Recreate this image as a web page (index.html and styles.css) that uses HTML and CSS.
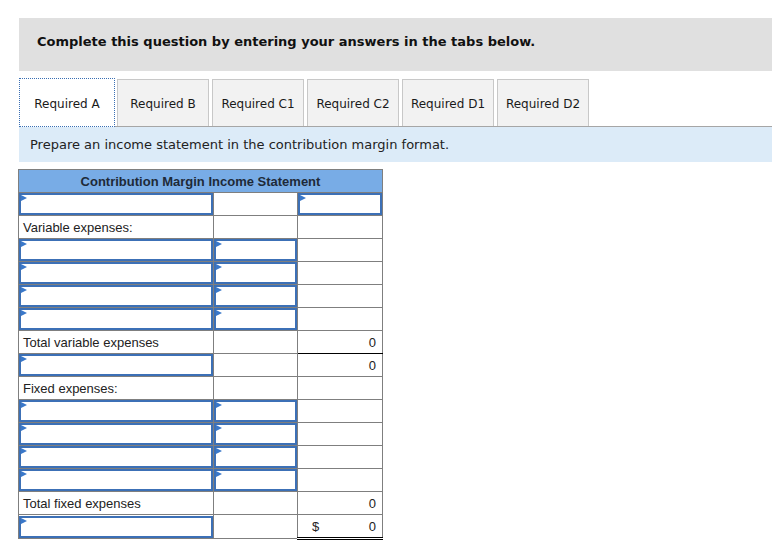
FILE: index.html
```html
<!DOCTYPE html>
<html>
<head>
<meta charset="utf-8">
<link rel="stylesheet" href="styles.css">
</head>
<body>
<div class="banner">Complete this question by entering your answers in the tabs below.</div>
<div class="tabs">
  <div class="tab active">Required A</div>
  <div class="tab">Required B</div>
  <div class="tab">Required C1</div>
  <div class="tab">Required C2</div>
  <div class="tab">Required D1</div>
  <div class="tab">Required D2</div>
</div>
<div class="instr">Prepare an income statement in the contribution margin format.</div>
<table class="cm">
  <colgroup><col class="c1"><col class="c2"><col class="c3"></colgroup>
  <tr><th colspan="3">Contribution Margin Income Statement</th></tr>
  <tr><td class="in"><div class="box"></div></td><td></td><td class="in"><div class="box"></div></td></tr>
  <tr><td class="lbl">Variable expenses:</td><td></td><td></td></tr>
  <tr><td class="in"><div class="box"></div></td><td class="in"><div class="box"></div></td><td></td></tr>
  <tr><td class="in"><div class="box"></div></td><td class="in"><div class="box"></div></td><td></td></tr>
  <tr><td class="in"><div class="box"></div></td><td class="in"><div class="box"></div></td><td></td></tr>
  <tr><td class="in"><div class="box"></div></td><td class="in"><div class="box"></div></td><td></td></tr>
  <tr><td class="lbl">Total variable expenses</td><td class="topblk"></td><td class="num botblk">0</td></tr>
  <tr><td class="in"><div class="box"></div></td><td></td><td class="num">0</td></tr>
  <tr><td class="lbl">Fixed expenses:</td><td></td><td></td></tr>
  <tr><td class="in"><div class="box"></div></td><td class="in"><div class="box"></div></td><td></td></tr>
  <tr><td class="in"><div class="box"></div></td><td class="in"><div class="box"></div></td><td></td></tr>
  <tr><td class="in"><div class="box"></div></td><td class="in"><div class="box"></div></td><td></td></tr>
  <tr><td class="in"><div class="box"></div></td><td class="in"><div class="box"></div></td><td></td></tr>
  <tr><td class="lbl">Total fixed expenses</td><td class="topblk"></td><td class="num">0</td></tr>
  <tr><td class="in"><div class="box"></div></td><td></td><td class="num final"><span class="cur">$</span><span>0</span></td></tr>
</table>
</body>
</html>
```
FILE: styles.css
```css
html, body { margin: 0; padding: 0; background: #fff; }
body { font-family: "DejaVu Sans", Verdana, sans-serif; color: #222; }

.banner {
  margin: 18px 0 0 19px;
  height: 53px;
  box-sizing: border-box;
  padding: 16px 18px 0;
  line-height: 16px;
  background: #e0e0e0;
  font-weight: bold;
  font-size: 13px;
  color: #111;
}

.tabs {
  display: flex;
  align-items: flex-end;
  gap: 3px;
  margin: 7px 0 0 19px;
  height: 48px;
  border-bottom: 1px solid #a6a6a6;
}
.tab {
  width: 92px;
  height: 47px;
  box-sizing: border-box;
  border: 1px solid #c8c8c8;
  border-bottom: none;
  background: #f2f2f2;
  font-size: 12px;
  line-height: 48px;
  text-align: center;
  white-space: nowrap;
  color: #1a1a1a;
}
.tab.active {
  width: 96px;
  height: 49px;
  margin-right: -1px;
  margin-bottom: -1px;
  border: 1px dotted #3a6fb4;
  background: #fff;
  line-height: 50px;
}

.instr {
  margin-left: 19px;
  height: 35px;
  box-sizing: border-box;
  padding: 0 11px;
  line-height: 36px;
  background: #dcebf8;
  font-size: 13px;
  color: #222;
}

.cm {
  margin: 7px 0 0 18px;
  border-collapse: collapse;
  table-layout: fixed;
  width: 364px;
  font-family: "Liberation Sans", Arial, sans-serif;
  font-size: 13px;
  color: #222;
}
.cm col.c1 { width: 195px; }
.cm col.c2 { width: 84px; }
.cm col.c3 { width: 85px; }
.cm th {
  height: 22px;
  padding: 0;
  border: 1px solid #7f7f7f;
  background: #78ace6;
  font-weight: bold;
  font-size: 13px;
  color: #1e2a38;
  text-align: center;
}
.cm td {
  height: 22px;
  padding: 0 4px;
  border: 1px solid #7f7f7f;
  vertical-align: middle;
}
.cm td.in { padding: 0; }
.box {
  position: relative;
  height: 22px;
  box-sizing: border-box;
  border: 2px solid #3c70b6;
  background: #fff;
}
.box::before {
  content: "";
  position: absolute;
  left: 0;
  top: 0;
  border-top: 3px solid transparent;
  border-bottom: 3px solid transparent;
  border-left: 6px solid #3a78c9;
}
.cm td.num { text-align: right; padding-right: 6px; }
.cm td.topblk { border-top: 1px solid #000; }
.cm td.botblk { border-bottom: 1px solid #000; }
.cm td.final {
  border-top: 1px solid #000;
  border-bottom: 3px double #000;
}
.final .cur { float: left; padding-left: 10px; }
```
